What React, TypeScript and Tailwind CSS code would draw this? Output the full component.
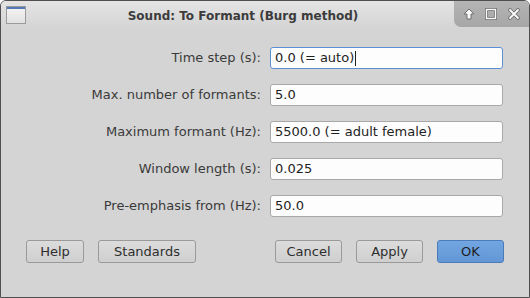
import React from "react";

const font = { fontFamily: '"DejaVu Sans", sans-serif' };

const fields = [
  { label: "Time step (s):", value: "0.0 (= auto)", focus: true },
  { label: "Max. number of formants:", value: "5.0" },
  { label: "Maximum formant (Hz):", value: "5500.0 (= adult female)" },
  { label: "Window length (s):", value: "0.025" },
  { label: "Pre-emphasis from (Hz):", value: "50.0" },
];

function TitleButtons() {
  return (
    <div className="absolute right-0 top-0 flex h-[26px] w-[75px] items-center justify-around rounded-bl-[7px] bg-gradient-to-b from-[#b4b4b4] to-[#a6a6a6] px-[4px]">
      <svg width="14" height="14" viewBox="0 0 14 14">
        <path d="M7 2 L12 7 L9 7 L9 12 L5 12 L5 7 L2 7 Z" fill="#fafafa" stroke="#6e6e6e" strokeWidth="1" strokeLinejoin="round" />
      </svg>
      <svg width="14" height="14" viewBox="0 0 14 14">
        <rect x="2.5" y="2.5" width="9" height="9" fill="none" stroke="#6e6e6e" strokeWidth="3" />
        <rect x="2.5" y="2.5" width="9" height="9" fill="none" stroke="#fafafa" strokeWidth="1.4" />
      </svg>
      <svg width="14" height="14" viewBox="0 0 14 14">
        <path d="M3 3 L11 11 M11 3 L3 11" stroke="#6e6e6e" strokeWidth="3.6" strokeLinecap="round" />
        <path d="M3 3 L11 11 M11 3 L3 11" stroke="#fafafa" strokeWidth="1.8" strokeLinecap="round" />
      </svg>
    </div>
  );
}

function Button({ label, primary, w }: { label: string; primary?: boolean; w: string }) {
  return (
    <div
      className={`flex h-[23px] items-center justify-center rounded-[3px] border text-[13px] ${w} ${
        primary
          ? "border-[#4a7ab8] bg-gradient-to-b from-[#72a6e2] to-[#6296d6] text-[#1e1e1e]"
          : "border-[#9a9a9a] bg-gradient-to-b from-[#dcdcdc] to-[#cfcfcf] text-[#2e2e2e]"
      }`}
    >
      {label}
    </div>
  );
}

export default function App() {
  return (
    <div className="h-[298px] w-[530px] overflow-hidden rounded-t-[6px] border border-[#4f4f4f] bg-[#d4d4d4]" style={font}>
      <div className="relative flex h-[28px] items-center justify-center bg-gradient-to-b from-[#e4e4e4] to-[#d4d4d4]">
        <div className="absolute left-[5px] top-[5px] h-[18px] w-[20px] border border-[#9a9a9a] bg-gradient-to-b from-[#f4f4f4] to-[#e2e2e2]">
          <div className="h-[2px] bg-[#5477b7]" />
        </div>
        <span className="ml-[-44px] mt-[2px] text-[12px] font-bold text-[#3c3c3c]">Sound: To Formant (Burg method)</span>
        <TitleButtons />
      </div>
      <div className="flex flex-col gap-[15px] pt-[18px]">
        {fields.map((f) => (
          <div key={f.label} className="flex h-[22px] items-center">
            <div className="w-[260px] text-right text-[13px] text-[#3a3a3a]">{f.label}</div>
            <div
              className={`ml-[9px] flex h-[22px] w-[233px] items-center rounded-[3px] border bg-[#fdfdfd] pl-[4px] text-[13px] text-[#1e1e1e] ${
                f.focus ? "border-[#5b8fd4]" : "border-[#a8a8a8]"
              }`}
            >
              {f.value}
              {f.focus && <span className="ml-[1px] h-[15px] w-[1px] bg-[#1e1e1e]" />}
            </div>
          </div>
        ))}
      </div>
      <div className="mt-[23px] flex items-center pl-[25px]">
        <Button label="Help" w="w-[58px]" />
        <div className="ml-[14px]">
          <Button label="Standards" w="w-[98px]" />
        </div>
        <div className="ml-auto mr-[25px] flex gap-[14px]">
          <Button label="Cancel" w="w-[67px]" />
          <Button label="Apply" w="w-[67px]" />
          <Button label="OK" w="w-[67px]" primary />
        </div>
      </div>
    </div>
  );
}
